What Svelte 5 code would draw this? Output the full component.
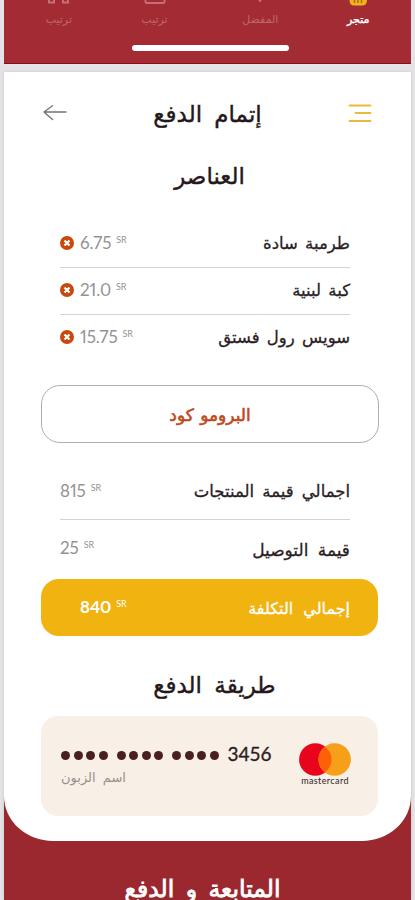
<script>
  const tabs = [
    { label: 'متجر', icon: 'shop', active: true },
    { label: 'المفضل', icon: 'heart' },
    { label: 'ترتيب', icon: 'box' },
    { label: 'ترتيب', icon: 'grid' }
  ];
  const items = [
    { name: 'طرمبة سادة', price: '6.75' },
    { name: 'كبة لبنية', price: '21.0' },
    { name: 'سويس رول فستق', price: '15.75' }
  ];
  const sums = [
    { name: 'اجمالي قيمة المنتجات', price: '815' },
    { name: 'قيمة التوصيل', price: '25' }
  ];
  const groups = [0, 1, 2];
  const dots = [0, 1, 2, 3];
</script>

<div class="page" dir="rtl">
  <nav class="tabbar">
    <div class="tabs">
      {#each tabs as tab}
        <div class="tab {tab.icon}" class:active={tab.active}>
          <svg width="26" height="7" viewBox="0 0 26 7">
            {#if tab.icon === 'shop'}
              <path d="M4.500 -4H22V0Q22 5.500 17 5.500H9.500Q4.500 5.500 4.500 0Z" fill="#f6b318" />
              <path d="M9.500 0V3M13 0V3M16.500 0V3" stroke="#a66a22" stroke-width="1.500" />
            {:else if tab.icon === 'heart'}
              <path d="M9.500 -2L13 2.500L16.500 -2Z" fill="#c66e75" />
            {:else if tab.icon === 'box'}
              <path d="M3.500 -3V1.500Q3.500 3 5 3H21Q22.500 3 22.500 1.500V-3" fill="none" stroke="#c66e75" stroke-width="2" />
            {:else}
              <path d="M3 -3V2.500H8V-3M17 -3V2.500H22V-3" fill="none" stroke="#c66e75" stroke-width="2" />
            {/if}
          </svg>
          <span>{tab.label}</span>
        </div>
      {/each}
    </div>
    <div class="home"></div>
  </nav>

  <div class="screen">
    <main class="sheet">
      <header>
        <svg class="menu" width="24" height="20" viewBox="0 0 24 20" fill="none" stroke="#e9b93c" stroke-width="1.800" stroke-linecap="round">
          <path d="M1.500 1.500H22.500M7.500 9H22.500M1.500 17H22.500" />
        </svg>
        <h1>إتمام الدفع</h1>
        <svg class="back" width="24" height="18" viewBox="0 0 24 18" fill="none" stroke="#77716f" stroke-width="1.300" stroke-linecap="round" stroke-linejoin="round">
          <path d="M23 7H1M9.500 0.700L1 7L9.500 14.500" />
        </svg>
      </header>
      <h2 class="elements">العناصر</h2>

      <section class="list">
        {#each items as item}
          <div class="row">
            <span class="name">{item.name}</span>
            <span class="price" dir="ltr">
              <svg width="14" height="14" viewBox="0 0 14 14">
                <circle cx="7" cy="7" r="7" fill="#c8480e" />
                <path d="M4.500 4.500L9.500 9.500M9.500 4.500L4.500 9.500" stroke="#fff" stroke-width="2.200" />
              </svg>
              <b>{item.price}</b><sup>SR</sup>
            </span>
          </div>
        {/each}
      </section>

      <button class="promo">البرومو كود</button>

      <section class="sums">
        {#each sums as item}
          <div class="row">
            <span class="name">{item.name}</span>
            <span class="price" dir="ltr"><b>{item.price}</b><sup>SR</sup></span>
          </div>
        {/each}
      </section>

      <div class="total">
        <span class="name">إجمالي التكلفة</span>
        <span class="price" dir="ltr"><b>840</b><sup>SR</sup></span>
      </div>

      <h2 class="method">طريقة الدفع</h2>

      <section class="card" dir="ltr">
        <div class="details">
          <div class="number">
            {#each groups as g}
              <span class="group">{#each dots as d}<i></i>{/each}</span>
            {/each}
            <span class="digits">3456</span>
          </div>
          <span class="holder" dir="rtl">اسم الزبون</span>
        </div>
        <div class="brand">
          <svg width="52" height="33" viewBox="0 0 52 33">
            <circle cx="16.300" cy="16.500" r="16.200" fill="#e9041e" />
            <circle cx="35.700" cy="16.500" r="16.200" fill="#f6a01a" />
            <path d="M26 3.500A16.200 16.200 0 0 1 26 29.500A16.200 16.200 0 0 1 26 3.500Z" fill="#fc6008" />
          </svg>
          <span>mastercard</span>
        </div>
      </section>
    </main>
    <button class="pay">المتابعة و الدفع</button>
  </div>
</div>

<style>
  :global(body) {
    margin: 0;
    background: #e5e3e6;
  }
  .page {
    box-sizing: border-box;
    width: 415px;
    height: 900px;
    padding: 0 4px;
    overflow: hidden;
    background: #e5e3e6;
    font-family: 'DejaVu Sans', sans-serif;
    color: #2a1d1f;
  }
  h1, h2 {
    margin: 0;
    font-weight: 400;
    font-size: 23px;
    line-height: 30px;
    text-align: center;
    word-spacing: 5px;
    color: #25171a;
    -webkit-text-stroke: 0.4px currentColor;
  }
  button {
    display: block;
    padding: 0;
    border: 0;
    background: none;
    font-family: inherit;
  }
  .tabbar {
    box-sizing: border-box;
    height: 64px;
    background: #a32c34;
    border-bottom: 1px solid #8e0d18;
  }
  .tabs {
    display: flex;
    padding: 0 37px 0 39px;
  }
  .tab {
    display: flex;
    flex-direction: column;
    align-items: center;
    width: 32px;
    font-size: 11px;
    line-height: 18px;
    color: #c1666d;
    white-space: nowrap;
  }
  .tab span { margin-top: 4px; }
  .heart { margin-right: 66px; }
  .box { margin-right: 74px; }
  .grid { margin-right: 64px; }
  .active { color: #fff; -webkit-text-stroke: 0.4px #fff; }
  .home {
    width: 157px;
    height: 6px;
    margin: 16px auto 0;
    border-radius: 3px;
    background: #fff;
    transform: translateX(3px);
  }
  .screen {
    height: 829px;
    margin-top: 8px;
    background: #9b282f;
    box-shadow: 0 0 3px #c9c6ca;
  }
  .sheet {
    box-sizing: border-box;
    height: 769px;
    padding: 27px 33px 0 37px;
    border-radius: 0 0 49px 49px / 0 0 45px 45px;
    background: #fff;
  }
  header {
    display: flex;
    align-items: center;
    justify-content: space-between;
    height: 30px;
    padding: 0 6px 0 2px;
  }
  .elements { margin-top: 32px; }
  .list {
    margin: 30px 28px 0 20px;
    width: 290px;
  }
  .row {
    box-sizing: border-box;
    display: flex;
    align-items: center;
    justify-content: space-between;
    height: 47px;
    border-bottom: 1px solid #d4d2d3;
  }
  .row:last-child { border-bottom-color: transparent; }
  .name {
    font-size: 16.500px;
    line-height: 24px;
    word-spacing: 2px;
    white-space: nowrap;
    -webkit-text-stroke: 0.3px currentColor;
  }
  .list .name { margin-top: -1px; }
  .price {
    display: flex;
    align-items: center;
    margin-top: -2px;
    font-family: Lato, sans-serif;
    font-size: 17px;
    line-height: 22px;
    font-variant-numeric: proportional-nums;
    letter-spacing: -0.100px;
    color: #969294;
  }
  .price svg { margin-right: 6px; }
  .price b { font-weight: 400; }
  .price sup {
    align-self: flex-start;
    margin-left: 5px;
    font-size: 9px;
    line-height: 15px;
  }
  .promo {
    box-sizing: border-box;
    width: 338px;
    height: 58px;
    margin: 23px -1px 0 0;
    padding-top: 2px;
    border: 1px solid #b1aeb0;
    border-radius: 19px;
    font-size: 17px;
    word-spacing: 1px;
    -webkit-text-stroke: 0.600px currentColor;
    color: #bf481b;
  }
  .sums {
    width: 290px;
    margin: 20px 28px 0 0;
  }
  .sums .row { height: 57px; }
  .sums .name {
    padding-top: 2px;
    word-spacing: 3px;
  }
  .sums .price { margin-top: 0; }
  .sums .row + .row .name {
    padding-top: 4px;
    font-size: 17px;
    word-spacing: 4px;
  }
  .total {
    box-sizing: border-box;
    display: flex;
    align-items: center;
    justify-content: space-between;
    height: 57px;
    margin: 2px 0 0;
    padding: 0 28px 0 39px;
    border-radius: 18px;
    background: #f1b310;
    color: #fff;
  }
  .total .name { padding-top: 3px; font-size: 16px; word-spacing: 5px; }
  .total .price { color: #fff; }
  .total .price b { font-weight: 700; }
  .method {
    margin-top: 34px;
    padding-left: 10px;
  }
  .card {
    box-sizing: border-box;
    display: flex;
    justify-content: space-between;
    height: 100px;
    margin-top: 16px;
    padding: 27px 27px 0 20px;
    border-radius: 17px;
    background: #f8efe6;
  }
  .number {
    display: flex;
    align-items: center;
    gap: 9px;
    height: 24px;
  }
  .group { display: flex; gap: 3.500px; }
  .group i {
    width: 9px;
    height: 9px;
    border-radius: 50%;
    background: #4a1f22;
  }
  .digits {
    margin-top: -3px;
    font-family: Lato, sans-serif;
    font-size: 19px;
    color: #2a1d1f;
    -webkit-text-stroke: 0.3px currentColor;
  }
  .details {
    display: flex;
    flex-direction: column;
    align-items: flex-start;
  }
  .holder {
    margin-top: 1px;
    font-size: 13px;
    line-height: 20px;
    word-spacing: 3px;
    color: #97908c;
  }
  .brand {
    display: flex;
    flex-direction: column;
    align-items: center;
    width: 52px;
  }
  .brand span {
    font-family: Lato, sans-serif;
    font-size: 9px;
    line-height: 9px;
    letter-spacing: 0.400px;
  }
  .pay {
    margin: 32px auto 0;
    font-size: 23.500px;
    line-height: 32px;
    word-spacing: 4px;
    -webkit-text-stroke: 0.800px currentColor;
    transform: translateX(-5px);
    color: #fff;
  }
</style>
